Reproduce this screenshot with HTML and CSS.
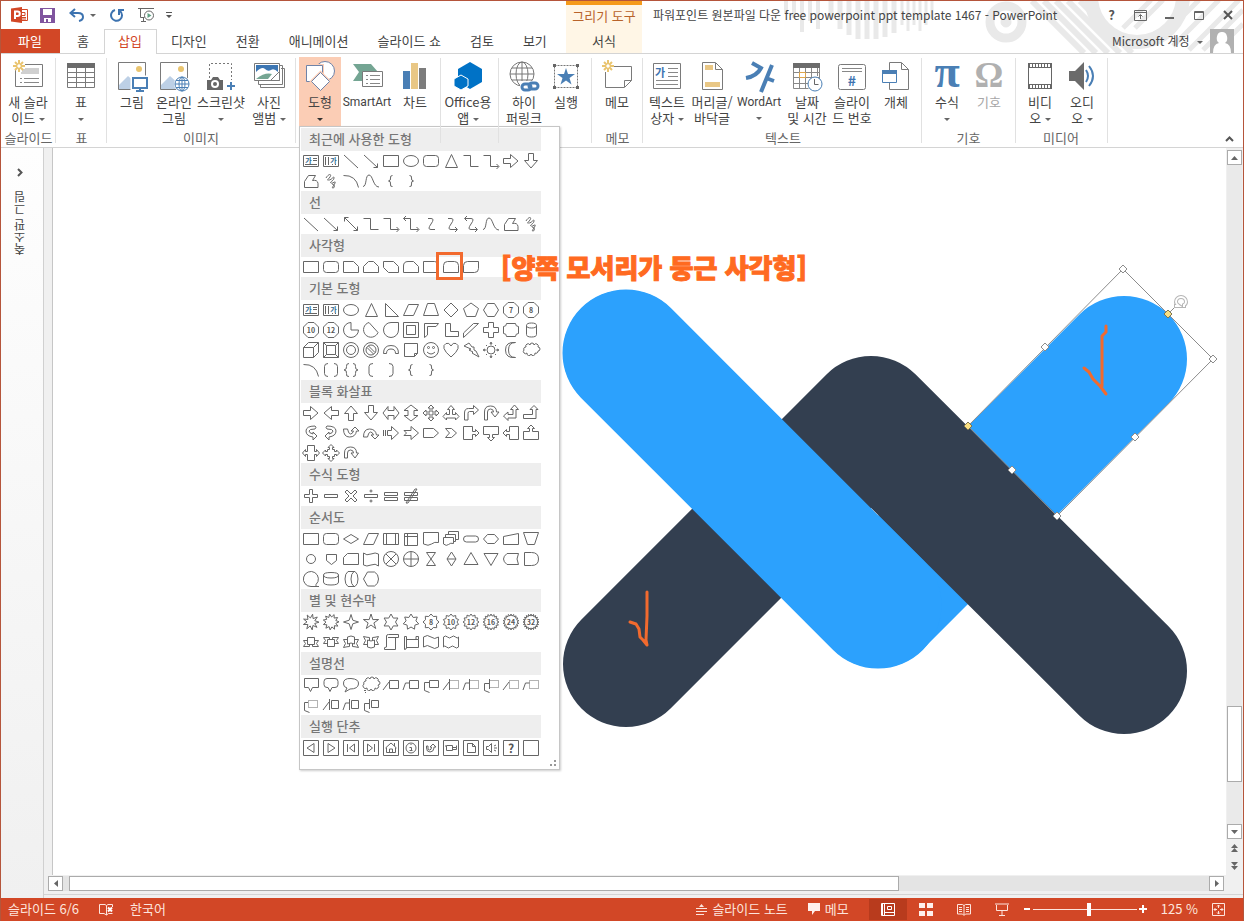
FILE: index.html
```html
<!DOCTYPE html>
<html lang="ko">

<head>
  <meta charset="UTF-8">
  <meta name="viewport" content="width=device-width, initial-scale=1.0">
  <title>파워포인트 원본파일 다운 - PowerPoint</title>
  <link rel="stylesheet" href="styles.css">
</head>

<body>
  <div class="window">
    <!-- 제목 표시줄 -->
    <header class="header">
      <svg class="deco" width="460" height="52" viewBox="784 1 460 52">
        <g stroke="#e9e9e9" fill="none">
          <path stroke-width="4" d="M787 1v13M795 1v17M803 1v31M811 1v20M819 1v28" />
          <path stroke-width="5" d="M832 1v18M841 1v28M850 1v34M859 1v38M868 1v38M877 1v38M886 1v36M895 1v32" />
          <path stroke-width="3" d="M903 1v24M909 1v30M915 1v24M921 1v30M927 1v24M933 1v18" />
          <circle cx="1007" cy="22" r="16" stroke-width="9" />
          <circle cx="1007" cy="22" r="5" fill="#e9e9e9" />
          <path stroke-width="6" d="M1033 1l52 52M1045 1l52 52M1057 1l52 52M1069 1l52 52M1081 1l52 52" />
          <circle cx="1138" cy="-4" r="46" stroke-width="14" fill="#fff" />
          <path stroke-width="5" d="M1124 28l28 -28M1136 28l28 -28M1164 36l36 -36M1174 46l46 -46M1190 50l50 -50M1204 50l40 -40M1218 50l26 -26" />
        </g>
      </svg>
      <div class="titlebar">
        <div class="quick">
          <svg class="logo" width="18" height="18" viewBox="0 0 18 18">
            <path fill="#fff" stroke="#d24726" d="M9.500 3.500h7v11h-7z" />
            <path fill="none" stroke="#d24726" d="M11 6.500h3v3h-3M11 11.500h4M11 13h4" />
            <path fill="#d24726" d="M0 2.500L11 1v16L0 15.500z" />
            <path fill="none" stroke="#fff" stroke-width="2" d="M4 13V5.500h2.500a2 2 0 0 1 0 4.500H4" />
          </svg>
          <button class="qbtn save" aria-label="저장">
            <svg width="15" height="15" viewBox="0 0 15 15">
              <path fill="#80559f" d="M0 0h15v15H0z" />
              <path fill="#fff" d="M3 1h9v6H3zM4 10h7v4H8v-3H6v3H4z" />
            </svg>
          </button>
          <button class="qbtn undo" aria-label="실행 취소">
            <svg width="16" height="14" viewBox="0 0 16 14">
              <path fill="none" stroke="#3d73b0" stroke-width="2" d="M6 1L1.500 5L6 9M2 5h7q5 0 5 4q0 3-4 4" />
            </svg>
            <i class="caret"></i>
          </button>
          <button class="qbtn redo" aria-label="다시 실행">
            <svg width="14" height="14" viewBox="0 0 14 14">
              <path fill="none" stroke="#3d73b0" stroke-width="2" d="M5 2a5.500 5.500 0 1 0 5 1M9 7V2h5" />
            </svg>
          </button>
          <button class="qbtn show" aria-label="처음부터 시작">
            <svg width="17" height="16" viewBox="0 0 17 16">
              <path fill="none" stroke="#666" d="M0 1.500h16M2.500 2v8.500h4M5.500 11v3M3 14.500h5" />
              <circle cx="11" cy="8.500" r="4.500" fill="#fff" stroke="#666" />
              <path fill="#5fa082" d="M9.500 6v5l4-2.500z" />
            </svg>
          </button>
          <button class="qbtn" aria-label="빠른 실행 도구 모음 사용자 지정">
            <svg width="6" height="8" viewBox="0 0 6 8">
              <path fill="#555" d="M0 1h6v1H0zM0 4h6L3 7z" />
            </svg>
          </button>
        </div>
        <div class="context">그리기 도구</div>
        <h1 class="title">파워포인트 원본파일 다운 free powerpoint ppt template 1467 - PowerPoint</h1>
        <div class="winbtns">
          <button aria-label="도움말">?</button>
          <button aria-label="리본 메뉴 표시 옵션">
            <svg width="13" height="11" viewBox="0 0 13 11">
              <path fill="none" stroke="#666" d="M.5.5h12v10H.5zM1 2.500h11M6.500 9V5M4.500 6.500l2-2l2 2" />
            </svg>
          </button>
          <button aria-label="최소화">
            <svg width="10" height="11" viewBox="0 0 10 11"><path fill="#666" d="M0 7h9v2H0z" /></svg>
          </button>
          <button aria-label="최대화">
            <svg width="10" height="11" viewBox="0 0 10 11"><path fill="none" stroke="#666" d="M.5 1.500h9v8h-9zM0 2.500h10" /></svg>
          </button>
          <button aria-label="닫기">
            <svg width="10" height="10" viewBox="0 0 10 10"><path stroke="#555" stroke-width="2" d="M1 1l8 8M9 1l-8 8" /></svg>
          </button>
        </div>
      </div>

      <nav class="tabs">
        <div class="tablist">
          <button class="tab file">파일</button>
          <button class="tab">홈</button>
          <button class="tab active">삽입</button>
          <button class="tab">디자인</button>
          <button class="tab">전환</button>
          <button class="tab">애니메이션</button>
          <button class="tab">슬라이드 쇼</button>
          <button class="tab">검토</button>
          <button class="tab">보기</button>
        </div>
        <button class="context format">서식</button>
        <button class="account">Microsoft 계정 <i class="caret"></i></button>
        <svg class="avatar" width="24" height="24" viewBox="0 0 24 24">
          <path fill="#b1b1b1" d="M0 0h24v24H0z" />
          <path fill="#fff" d="M12 3a5 6 0 0 1 3 11q6 1 6 10H3q0-9 6-10a5 6 0 0 1 3-11z" />
        </svg>
      </nav>
    </header>

    <!-- 리본 메뉴 -->
    <section class="ribbon">
      <div class="group g-slide">
        <div class="items">
          <button class="big w54">
            <svg viewBox="0 0 32 32">
              <path fill="#fff" stroke="#7a7a7a" d="M3.500 4.500h27v22h-27z" />
              <path fill="#d0d0d0" d="M9 8h18v6H9z" />
              <path stroke="#888" d="M8 18.500h2M12 18.500h15M8 22.500h2M12 22.500h15" />
              <path stroke="#fff" stroke-width="6" d="M1 6h12M7 1v11" />
              <path stroke="#e9c46f" stroke-width="2" d="M7 0v4M7 8v4M1 6h4M9 6h4M3 2l3 3M8 7l3 3M11 2l-3 3M6 7l-3 3" />
            </svg>
            <span>새 슬라<br>이드 <i class="caret"></i></span>
          </button>
        </div>
        <p class="gname">슬라이드</p>
      </div>

      <div class="group g-table">
        <div class="items">
          <button class="big w50">
            <svg viewBox="0 0 32 32">
              <path fill="#fff" stroke="#7a7a7a" d="M2.500 3.500h27v24h-27zM2 12.500h28M2 17.500h28M2 22.500h28M11.500 8v20M20.500 8v20" />
              <path fill="#6b6b6b" d="M2 3h28v5H2z" />
            </svg>
            <span>표<br><i class="caret"></i></span>
          </button>
        </div>
        <p class="gname">표</p>
      </div>

      <div class="group g-image">
        <div class="items">
          <button class="big w42">
            <svg viewBox="0 0 32 32">
              <path fill="#fff" stroke="#7a7a7a" d="M2.500 2.500h27v27h-27z" />
              <circle cx="23" cy="9" r="3" fill="#e9c46f" />
              <path fill="#bdd0e6" d="M3 25l9-9l10 9v4H3z" />
              <path fill="#fff" stroke="#fff" stroke-width="3" d="M16 17h16v12H16z" />
              <path fill="#fff" stroke="#4a7fb5" stroke-width="2" d="M17 18h14v10H17z" />
              <path stroke="#4a7fb5" stroke-width="2" d="M24 28v3M20 31h8" />
            </svg>
            <span>그림</span>
          </button>
          <button class="big w42">
            <svg viewBox="0 0 32 32">
              <path fill="#fff" stroke="#7a7a7a" d="M2.500 2.500h27v27h-27z" />
              <circle cx="23" cy="9" r="3" fill="#e9c46f" />
              <path fill="#bdd0e6" d="M3 25l9-9l10 9v4H3z" />
              <circle cx="24" cy="24" r="8" fill="#fff" />
              <g fill="none" stroke="#4a7fb5">
                <circle cx="24" cy="24" r="7" />
                <ellipse cx="24" cy="24" rx="3" ry="7" />
                <path d="M17 24h14M18 20.500h12M18 27.500h12M24 17v14" />
              </g>
            </svg>
            <span>온라인<br>그림</span>
          </button>
          <button class="big w52">
            <svg viewBox="0 0 32 32">
              <path fill="none" stroke="#777" stroke-dasharray="2 2" d="M4.500 22V3.500h22V20" />
              <path fill="#666" d="M2 20h4l2-3h5l2 3h3v10H2z" />
              <circle cx="10" cy="24" r="4" fill="#fff" />
              <circle cx="10" cy="24" r="2" fill="#666" />
              <path stroke="#4a7fb5" stroke-width="2" d="M22 26h8M26 22v8" />
            </svg>
            <span>스크린샷<br><i class="caret"></i></span>
          </button>
          <button class="big w44">
            <svg viewBox="0 0 32 32">
              <path fill="none" stroke="#7a7a7a" d="M7.500 24v3.500h24v-19H28M5.500 20v4.500h24v-19H27" />
              <path fill="#fff" stroke="#7a7a7a" d="M1.500 3.500h25v17h-25z" />
              <path fill="#3c76b3" d="M3 5h22v7q-4-4-7-2t-6-1t-9 3z" />
              <path fill="#74a593" d="M3 19q9-7 16-5l-4 5z" />
              <path fill="#fff" stroke="#7a7a7a" d="M17.500 20.500l9-9v9z" />
            </svg>
            <span>사진<br>앨범 <i class="caret"></i></span>
          </button>
        </div>
        <p class="gname">이미지</p>
      </div>

      <div class="group g-illust">
        <div class="items">
          <div class="dropdown">
            <button class="big w42 pressed" aria-expanded="true">
              <svg viewBox="0 0 32 32">
                <g fill="#fff" stroke="#6f83a8">
                  <circle cx="21" cy="11" r="9.500" />
                  <path stroke="#fbcdb5" stroke-width="3" d="M2.500 5.500h16v16h-16z" />
                  <path d="M2.500 5.500h16v16h-16z" />
                  <path stroke="#fbcdb5" stroke-width="3" d="M16.500 12.500l9 9l-9 9l-9-9z" />
                  <path d="M16.500 12.500l9 9l-9 9l-9-9z" />
                </g>
              </svg>
              <span>도형<br><i class="caret"></i></span>
            </button>
            <div class="gallery" id="gallery"></div>
          </div>
          <button class="big w52 latin">
            <svg viewBox="0 0 32 32">
              <path fill="#74a593" d="M2 4h18l7 8h-15v9H2l6-9z" />
              <path fill="#fff" stroke="#7a7a7a" d="M11.500 11.500h20v15h-20z" />
              <path stroke="#888" d="M15 15.500h2M19 15.500h10M15 19.500h2M19 19.500h10M15 23.500h2M19 23.500h10" />
            </svg>
            <span>SmartArt</span>
          </button>
          <button class="big w44">
            <svg viewBox="0 0 32 32">
              <path fill="#4a7fb5" d="M4 11h7v18H4z" />
              <path fill="#e9c785" d="M12 3h7v26h-7z" />
              <path fill="#7c7c7c" d="M20 8h7v21h-7z" />
            </svg>
            <span>차트</span>
          </button>
        </div>
      </div>

      <div class="group g-app">
        <div class="items">
          <button class="big w54">
            <svg viewBox="0 0 32 32">
              <path fill="#0072c6" d="M18 2l12 7v13l-12 7l-12-7V9z" />
              <path fill="#0072c6" stroke="#fff" d="M9 15l7 4v7l-7 4l-7-4v-7z" />
            </svg>
            <span>Office용<br>앱 <i class="caret"></i></span>
          </button>
        </div>
      </div>

      <div class="group g-link">
        <div class="items">
          <button class="big w44">
            <svg viewBox="0 0 32 32">
              <g fill="none" stroke="#777">
                <circle cx="14" cy="14" r="12" />
                <ellipse cx="14" cy="14" rx="6" ry="12" />
                <path d="M2 14h24M4 8h20M4 20h20M14 2v24" />
              </g>
              <path fill="#fff" d="M12 21h20v11H12z" />
              <g fill="none" stroke="#4a7fb5" stroke-width="3">
                <rect x="14" y="24" width="9" height="6" rx="3" />
                <rect x="21" y="23" width="9" height="6" rx="3" />
              </g>
            </svg>
            <span>하이<br>퍼링크</span>
          </button>
          <button class="big w40">
            <svg viewBox="0 0 32 32">
              <path fill="none" stroke="#777" stroke-dasharray="2 1" d="M4.500 5.500h23v22h-23z" />
              <path fill="#666" d="M3 4h3v3H3zM26 4h3v3h-3zM3 26h3v3H3zM26 26h3v3h-3z" />
              <path fill="#4a7fb5" d="M16 8l2 6h7l-5.500 4l2 6.500L16 20.500l-5.500 4l2-6.500L7 14h7z" />
            </svg>
            <span>실행</span>
          </button>
        </div>
      </div>

      <div class="group g-memo">
        <div class="items">
          <button class="big w50">
            <svg viewBox="0 0 32 32">
              <path fill="#fff" stroke="#7a7a7a" d="M4.500 6.500h26v14l-7 7h-19zM23.500 27v-6.500h7" />
              <path stroke="#fff" stroke-width="6" d="M1 6h12M7 1v11" />
              <path stroke="#e9c46f" stroke-width="2" d="M7 0v4M7 8v4M1 6h4M9 6h4M3 2l3 3M8 7l3 3M11 2l-3 3M6 7l-3 3" />
            </svg>
            <span>메모</span>
          </button>
        </div>
        <p class="gname">메모</p>
      </div>

      <div class="group g-text">
        <div class="items">
          <button class="big w46">
            <svg viewBox="0 0 32 32">
              <path fill="#fff" stroke="#7a7a7a" d="M2.500 3.500h27v25h-27z" />
              <text x="4" y="17" font-size="11" font-weight="700" fill="#3d73b0">가</text>
              <path stroke="#888" d="M17 8.500h10M17 12.500h10M17 16.500h10M5 20.500h22M5 24.500h22" />
            </svg>
            <span>텍스트<br>상자 <i class="caret"></i></span>
          </button>
          <button class="big w44">
            <svg viewBox="0 0 32 32">
              <path fill="#fff" stroke="#7a7a7a" d="M6.500 2.500h13l7 7v20h-20zM19.500 3v6.500h7" />
              <path fill="#e9c785" d="M9 5h8v5H9zM9 22h15v5H9z" />
            </svg>
            <span>머리글/<br>바닥글</span>
          </button>
          <button class="big w50 latin">
            <svg viewBox="0 0 32 32">
              <path fill="none" stroke="#4a7fb5" stroke-width="4" d="M9 3l9 5q-4 8-15 10M29 5L18 32M23 18l8 3" />
            </svg>
            <span>WordArt<br><i class="caret"></i></span>
          </button>
          <button class="big w46">
            <svg viewBox="0 0 32 32">
              <path fill="#fff" stroke="#888" d="M2.500 8v20.500M2.500 12.500h26M2.500 17.500h26M2.500 23.500h20M8.500 8v20M14.500 8v20M20.500 8v16M26.500 8v8M2.500 28.500h15M28.500 8v12" />
              <path fill="#6b6b6b" d="M2 3h27v5H2z" />
              <path fill="none" stroke="#e0a74b" d="M8.500 12.500h6v5h-6z" />
              <circle cx="24" cy="24" r="7" fill="#fff" stroke="#4a7fb5" />
              <path fill="none" stroke="#666" d="M23.500 19v5.500h4" />
            </svg>
            <span>날짜<br>및 시간</span>
          </button>
          <button class="big w44">
            <svg viewBox="0 0 32 32">
              <rect x="2.500" y="4.500" width="27" height="25" rx="2" fill="#fff" stroke="#7a7a7a" />
              <path stroke="#888" d="M6 8.500h20M6 11.500h20" />
              <text x="16" y="26" font-size="14" font-weight="700" text-anchor="middle" fill="#3d73b0">#</text>
            </svg>
            <span>슬라이<br>드 번호</span>
          </button>
          <button class="big w44">
            <svg viewBox="0 0 32 32">
              <path fill="#fff" stroke="#7a7a7a" d="M9.500 2.500h12l7 7v20h-19zM21.500 3v6.500h7" />
              <path fill="#fff" stroke="#4a7fb5" d="M2.500 10.500h14v12h-14z" />
              <path fill="#4a7fb5" d="M2 10h15v4H2z" />
            </svg>
            <span>개체</span>
          </button>
        </div>
        <p class="gname">텍스트</p>
      </div>

      <div class="group g-symbol">
        <div class="items">
          <button class="big w42">
            <svg viewBox="0 0 32 32"><text class="glyph" x="16" y="27" fill="#4a7fb5">π</text></svg>
            <span>수식<br><i class="caret"></i></span>
          </button>
          <button class="big w42" disabled>
            <svg viewBox="0 0 32 32"><text class="glyph omega" x="16" y="27" fill="#b0b0b0">Ω</text></svg>
            <span>기호</span>
          </button>
        </div>
        <p class="gname">기호</p>
      </div>

      <div class="group g-media">
        <div class="items">
          <button class="big w42">
            <svg viewBox="0 0 32 32">
              <path fill="#666" d="M4 3h24v26H4z" />
              <path fill="#fff" d="M5 8h22v16H5z" />
              <path stroke="#fff" stroke-width="3" stroke-dasharray="2 1" d="M6 5.500h21M6 26.500h21" />
            </svg>
            <span>비디<br>오 <i class="caret"></i></span>
          </button>
          <button class="big w42">
            <svg viewBox="0 0 32 32">
              <path fill="#6b6b6b" d="M3 11h6l9-9v28l-9-9H3z" />
              <path fill="none" stroke="#4a7fb5" stroke-width="2" d="M20 10q4 6 0 12M23 6q8 10 0 20" />
            </svg>
            <span>오디<br>오 <i class="caret"></i></span>
          </button>
        </div>
        <p class="gname">미디어</p>
      </div>

      <button class="collapse" aria-label="리본 메뉴 축소">
        <svg width="9" height="6" viewBox="0 0 9 6"><path fill="none" stroke="#555" stroke-width="2" d="M1 5l3.500-3.500L8 5" /></svg>
      </button>
    </section>

    <!-- 작업 영역 -->
    <main class="work">
      <aside class="thumbs">
        <button aria-label="축소판 그림 확장">
          <svg width="6" height="9" viewBox="0 0 6 9"><path fill="none" stroke="#555" stroke-width="2" d="M1 1l3.500 3.500L1 8" /></svg>
        </button>
        <span>축소판 그림</span>
      </aside>

      <div class="editor">
        <div class="slide">
          <svg class="canvas" viewBox="53 148 1173 727">
            <g fill="none" stroke-width="126" stroke-linecap="round" stroke-linejoin="round">
              <path stroke="#2ca1fd" d="M626 353L878 605L1124 359" />
              <path stroke="#333f50" d="M626 664L871 419L1124 671" />
              <path stroke="#2ca1fd" stroke-width="127" d="M626 353L878 605" />
            </g>
            <!-- 선택 영역 -->
            <path fill="none" stroke="#8c8c8c" d="M1123 269L1213 359L1057 516L968 426zM1168 314l8-8" />
            <g fill="#fff" stroke="#8c8c8c">
              <path d="M1123 265l4 4l-4 4l-4-4zM1213 355l4 4l-4 4l-4-4zM1045 343l4 4l-4 4l-4-4zM1135 433l4 4l-4 4l-4-4zM1012 466l4 4l-4 4l-4-4zM1057 512l4 4l-4 4l-4-4z" />
              <path fill="#fbe083" stroke="#7d7550" d="M1168 310l4 4l-4 4l-4-4zM968 422l4 4l-4 4l-4-4z" />
            </g>
            <path fill="none" stroke="#b5b5b5" stroke-width="4" d="M1174 306h5q-3-2-3-4a5 5 0 1 1 10 0q0 2-2 3v3" />
            <path fill="none" stroke="#fff" stroke-width="2" d="M1175 306h4q-3-2-3-4a5 5 0 1 1 10 0q0 2-2 3v2" />
            <!-- 체크 표시 -->
            <g fill="none" stroke="#f26a2e" stroke-width="3" stroke-linecap="round" stroke-linejoin="round">
              <path d="M1106 326v6l-4 4v50M1084 368l5 4l4 7l7 7l6 8" />
              <path d="M647 592v24l-1 24l1 5M630 622l6 2l3 5l1 8l3 3l4 5" />
            </g>
          </svg>
          <strong class="note">[양쪽 모서리가 둥근 사각형]</strong>
        </div>

        <div class="vscroll">
          <button class="sbtn" aria-label="위로"><svg width="7" height="4" viewBox="0 0 7 4"><path d="M0 4h7L3.500 0z" /></svg></button>
          <div class="vtrack"><div class="vthumb"></div></div>
          <button class="sbtn" aria-label="아래로"><svg width="7" height="4" viewBox="0 0 7 4"><path d="M0 0h7L3.500 4z" /></svg></button>
          <button class="page" aria-label="이전 슬라이드"><svg width="7" height="8" viewBox="0 0 7 8"><path d="M0 4h7L3.500 0zM0 8h7L3.500 4z" /></svg></button>
          <button class="page" aria-label="다음 슬라이드"><svg width="7" height="8" viewBox="0 0 7 8"><path d="M0 0h7L3.500 4zM0 4h7L3.500 8z" /></svg></button>
        </div>

        <div class="hscroll">
          <button class="sbtn" aria-label="왼쪽으로"><svg width="4" height="7" viewBox="0 0 4 7"><path d="M4 0v7L0 3.500z" /></svg></button>
          <div class="htrack"><div class="hthumb"></div></div>
          <button class="sbtn" aria-label="오른쪽으로"><svg width="4" height="7" viewBox="0 0 4 7"><path d="M0 0v7l4-3.500z" /></svg></button>
        </div>
      </div>
    </main>

    <!-- 상태 표시줄 -->
    <footer class="status">
      <span>슬라이드 6/6</span>
      <button class="spell" aria-label="맞춤법 검사">
        <svg width="15" height="13" viewBox="0 0 15 13">
          <path fill="none" stroke="#fde5de" d="M7.500 12L5 10.500H.5v-9H6l1.500 1v9.500l2-1.500h4M7.500 2.500L9 1.500h4.500V4" />
          <path stroke="#fff" stroke-width="2" d="M9 4.500l4 4M13 4.500l-4 4" />
        </svg>
      </button>
      <button>한국어</button>
      <div class="views">
        <button class="notes">
          <svg width="11" height="11" viewBox="0 0 11 11"><path fill="#fde5de" d="M5.500 0L8 3H3zM0 4h11v1H0zM0 7h11v1H0zM0 10h8v1H0z" /></svg>
          슬라이드 노트
        </button>
        <button class="memo">
          <svg width="12" height="12" viewBox="0 0 12 12"><path fill="#fff0ec" d="M0 0h12v8H7l-3 4V8H0z" /></svg>
          메모
        </button>
        <button class="view on" aria-label="기본">
          <svg width="14" height="13" viewBox="0 0 14 13"><path fill="none" stroke="#fff" d="M.5.5h13v12H.5zM1.500 1v11M3.500 1v11M4 9.500h9M6.500 3.500h4v3h-4z" /></svg>
        </button>
        <button class="view" aria-label="여러 슬라이드">
          <svg width="14" height="13" viewBox="0 0 14 13"><path fill="#fff0ec" d="M0 0h6v5H0zM8 0h6v5H8zM0 8h6v5H0zM8 8h6v5H8z" /></svg>
        </button>
        <button class="view" aria-label="읽기용 보기">
          <svg width="14" height="13" viewBox="0 0 14 13"><path fill="none" stroke="#fde5de" d="M7 12.500L5.500 11H.5V1.500h5L7 2.500l1.500-1h5V11h-5zM7 2v10M2 4.500h3M2 6.500h3M2 8.500h3M9 4.500h3M9 6.500h3M9 8.500h3" /></svg>
        </button>
        <button class="view" aria-label="슬라이드 쇼">
          <svg width="14" height="13" viewBox="0 0 14 13"><path fill="none" stroke="#fde5de" d="M0 1h14M1.500 2v5.500h11V2M7 8v4M4 12.500h6" /></svg>
        </button>
        <button class="zoombtn" aria-label="축소"><svg width="8" height="8" viewBox="0 0 8 8"><path stroke="#fff" stroke-width="2" d="M1 4h6" /></svg></button>
        <input class="zoom" type="range" min="0" max="100" value="54" aria-label="확대/축소">
        <button class="zoombtn" aria-label="확대"><svg width="8" height="8" viewBox="0 0 8 8"><path stroke="#fff" stroke-width="2" d="M0 4h8M4 0v8" /></svg></button>
        <button class="percent">125 %</button>
        <button class="fit" aria-label="창에 맞춤">
          <svg width="13" height="13" viewBox="0 0 13 13"><path fill="none" stroke="#fde5de" d="M.5.5h12v12H.5zM6.500 2v3M5 3.500l1.500-1.500L8 3.500M6.500 11V8M5 9.500L6.500 11L8 9.500M2 6.500h3M3.500 5L2 6.500L3.500 8M11 6.500H8M9.500 5L11 6.500L9.500 8" /></svg>
        </button>
      </div>
    </footer>
  </div>
  <script src="script.js"></script>
</body>

</html>
```

FILE: styles.css
```css
* {
  box-sizing: border-box;
}

body {
  margin: 0;
  font-family: "Noto Sans CJK KR", sans-serif;
  font-size: 13px;
  line-height: 16px;
  color: #444;
}

button {
  padding: 0;
  border: 0;
  background: none;
  font: inherit;
  color: inherit;
  cursor: pointer;
}

svg {
  display: block;
}

.window {
  display: flex;
  flex-direction: column;
  height: 100vh;
  border: 1px solid #b5553b;
  border-bottom: 0;
  background-color: #fff;
}

.caret {
  display: inline-block;
  border: 3px solid transparent;
  border-top-color: #666;
  border-bottom: 0;
  vertical-align: middle;
}

/* 제목 표시줄 */
.header {
  position: relative;
}

.deco {
  position: absolute;
  top: 0;
  right: 0;
}

.titlebar {
  position: relative;
  display: flex;
  height: 28px;
}

.quick {
  display: flex;
  align-items: center;
  width: 565px;
  padding-left: 10px;
}

.logo {
  margin-right: 11px;
}

.qbtn {
  display: flex;
  align-items: center;
  gap: 5px;
}

.save {
  margin-right: 14px;
}

.undo {
  margin-right: 14px;
}

.redo {
  margin-right: 14px;
}

.show {
  margin-right: 11px;
}

.context {
  width: 76px;
  border-top: 4px solid #f59a1b;
  background-color: #fff6e6;
  line-height: 22px;
  text-align: center;
  color: #b8632a;
}

.title {
  flex: 1;
  margin: 0;
  padding-left: 11px;
  font-size: 12px;
  font-weight: 400;
  line-height: 28px;
  white-space: nowrap;
}

.winbtns {
  display: flex;
  padding-right: 1px;
}

.winbtns button {
  display: flex;
  align-items: center;
  justify-content: center;
  width: 29px;
  font-weight: 700;
  color: #555;
}

.tabs {
  position: relative;
  display: flex;
  height: 25px;
  border-bottom: 1px solid #d4d4d4;
}

.tablist {
  display: flex;
  width: 565px;
}

.tab {
  flex: none;
  height: 25px;
  padding: 0 14px 2px 13px;
  border: 1px solid transparent;
  border-bottom: 0;
  white-space: nowrap;
}

.file {
  width: 59px;
  height: 24px;
  margin-right: 3px;
  background-color: #d24726;
  color: #fff;
}

.active {
  border-color: #d4d4d4;
  background-color: #fff;
  color: #d24726;
}

.format {
  height: 24px;
  border: 0;
  color: #444;
}

.account {
  margin-left: auto;
  margin-right: 7px;
  font-size: 12px;
}

.account .caret {
  margin-left: 4px;
}

.avatar {
  margin-right: 9px;
}

/* 리본 메뉴 */
.ribbon {
  position: relative;
  z-index: 2;
  display: flex;
  height: 94px;
  border-bottom: 1px solid #d4d4d4;
}

.group {
  position: relative;
  display: flex;
  flex-direction: column;
  justify-content: space-between;
  padding: 3px 0 1px;
}

.group::after {
  content: "";
  position: absolute;
  top: 4px;
  right: 0;
  bottom: 4px;
  width: 1px;
  background-color: #e1e1e1;
}

.g-slide {
  width: 55px;
}

.g-table,
.g-memo {
  width: 51px;
}

.g-image {
  width: 189px;
  padding-left: 4px;
  padding-right: 5px;
}

.g-illust {
  width: 145px;
  padding-left: 3px;
}

.g-app {
  width: 58px;
}

.g-link {
  width: 93px;
  padding-left: 3px;
}

.g-text {
  width: 279px;
  padding-left: 1px;
}

.g-symbol {
  width: 94px;
  padding-left: 4px;
  padding-right: 5px;
}

.g-media {
  width: 92px;
  padding-left: 3px;
  padding-right: 5px;
}

.items {
  display: flex;
}

.big {
  display: flex;
  flex-direction: column;
  align-items: center;
  height: 69px;
  padding-top: 3px;
  white-space: nowrap;
}

.big svg {
  width: 32px;
  height: 32px;
  margin-bottom: 2px;
  overflow: visible;
}

.big:disabled {
  color: #a6a6a6;
}

.latin {
  font-family: Roboto, "Noto Sans CJK KR", sans-serif;
  font-size: 12px;
}

.w40 {
  width: 40px;
}

.w42 {
  width: 42px;
}

.w44 {
  width: 44px;
}

.w46 {
  width: 46px;
}

.w50 {
  width: 50px;
}

.w52 {
  width: 52px;
}

.w54 {
  width: 54px;
}

.pressed {
  background-color: #fbcdb5;
}

.pressed .caret {
  border-top-color: #333;
}

.glyph {
  font-family: "Liberation Serif", serif;
  font-size: 46px;
  font-weight: 700;
  text-anchor: middle;
}

.omega {
  font-size: 36px;
}

.gname {
  margin: 0;
  text-align: center;
  color: #666;
}

.collapse {
  align-self: flex-end;
  margin-left: auto;
  padding: 0 9px 5px 0;
}

/* 도형 갤러리 */
.dropdown {
  position: relative;
}

.gallery {
  position: absolute;
  top: 69px;
  left: 0;
  width: 261px;
  padding: 1px 1px 11px;
  border: 1px solid #c6c6c6;
  background-color: #fff;
  box-shadow: 1px 1px 2px rgba(0, 0, 0, .2);
}

.gallery::after {
  content: "";
  position: absolute;
  right: 3px;
  bottom: 3px;
  width: 2px;
  height: 2px;
  background-color: #999;
  box-shadow: -4px 0 #999, 0 -4px #999;
}

.gallery h2 {
  width: 240px;
  margin: 0;
  padding: 0 0 2px 8px;
  background-color: #eee;
  font-size: 13px;
  font-weight: 500;
  line-height: 21px;
  color: #777;
}

.shapes {
  display: grid;
  grid-template-columns: repeat(12, 20px);
  grid-auto-rows: 20px;
}

.shape {
  position: relative;
}

.shape svg {
  fill: none;
  stroke: #666;
}

.shape text {
  font-size: 7px;
  font-weight: 700;
  text-anchor: middle;
  fill: #555;
  stroke: none;
}

.shape .ga {
  fill: #2f6a91;
}

.shape .dot {
  stroke-dasharray: 1 1;
}

.shape .mark {
  font-size: 12px;
}

.marked::after {
  content: "";
  position: absolute;
  inset: -5px -2px -3px -5px;
  border: 3px solid #f26a2e;
}

/* 작업 영역 */
.work {
  display: flex;
  flex: 1;
  min-height: 0;
  background-color: #f0f0f0;
}

.thumbs {
  display: flex;
  flex-direction: column;
  align-items: center;
  gap: 14px;
  width: 43px;
  padding: 20px 4px 0 0;
  border-right: 1px solid #d0d0d0;
  background: linear-gradient(#fefefe, #f0f0f0);
}

.thumbs span {
  writing-mode: vertical-rl;
  transform: rotate(180deg);
  font-size: 12px;
}

.editor {
  display: grid;
  flex: 1;
  grid-template-columns: 1fr 17px;
  grid-template-rows: 1fr 20px;
  padding-bottom: 3px;
}

.slide {
  position: relative;
  min-height: 0;
  margin-left: 8px;
  border-left: 1px solid #c6c6c6;
  background-color: #fff;
}

.canvas {
  position: absolute;
  width: 100%;
  height: 100%;
}

.note {
  position: absolute;
  z-index: 3;
  top: 99px;
  left: 448px;
  font-size: 26px;
  font-weight: 900;
  line-height: 40px;
  white-space: nowrap;
  color: #ff6a21;
  -webkit-text-stroke: 1px #ff6a21;
}

.sbtn {
  display: flex;
  flex: none;
  align-items: center;
  justify-content: center;
  width: 15px;
  height: 15px;
  border: 1px solid #ababab;
  background-color: #fff;
}

.sbtn svg,
.page svg {
  fill: #666;
}

.vscroll {
  display: flex;
  flex-direction: column;
  align-items: center;
  padding-top: 2px;
}

.vtrack {
  display: flex;
  flex: 1;
  flex-direction: column;
  justify-content: flex-end;
  width: 15px;
  padding-bottom: 42px;
  background-color: #eaeaea;
}

.vthumb {
  height: 76px;
  border: 1px solid #ababab;
  background-color: #fff;
}

.page {
  display: flex;
  align-items: center;
  height: 18px;
}

.hscroll {
  display: flex;
  grid-column: 1 / 3;
  padding: 1px 19px 3px 4px;
  border-bottom: 1px solid #d4d4d4;
}

.htrack {
  flex: 1;
  padding: 0 3px 0 6px;
  background-color: #e4e4e4;
}

.hthumb {
  width: 73%;
  height: 15px;
  border: 1px solid #ababab;
  background-color: #fff;
}

/* 상태 표시줄 */
.status {
  display: flex;
  align-items: center;
  height: 23px;
  padding: 0 18px 1px 7px;
  background-color: #d24726;
  color: #fde5de;
  white-space: nowrap;
}

.spell {
  margin: 0 16px 0 20px;
}

.views {
  display: flex;
  align-items: center;
  margin-left: auto;
}

.notes,
.memo {
  display: flex;
  align-items: center;
  gap: 5px;
  margin-right: 20px;
}

.view {
  display: flex;
  align-items: center;
  justify-content: center;
  width: 38px;
  height: 21px;
}

.on {
  background-color: #b83b1d;
}

.zoombtn {
  margin: 0 2px;
}

.zoom {
  appearance: none;
  width: 104px;
  height: 13px;
  margin: 0;
  background: linear-gradient(#fde5de, #fde5de) center / 100% 1px no-repeat;
}

.zoom::-webkit-slider-thumb {
  appearance: none;
  width: 4px;
  height: 13px;
  background-color: #fff;
}

.percent {
  margin: 0 14px 0 12px;
}
```

FILE: script.js
```js
// 정다각형과 별의 꼭짓점을 계산
function star(n, outer, inner, turn) {
  let d = ''
  for (let i = 0; i < n * 2; i++) {
    const r = i % 2 === 0 ? outer : inner
    const a = Math.PI * i / n - Math.PI / 2 + (turn || 0)
    d += (i === 0 ? 'M' : 'L') + (10 + r * Math.cos(a)).toFixed(1) + ' ' + (10 + r * Math.sin(a)).toFixed(1)
  }
  return d + 'z'
}

function numbered(d, num) {
  return `<path d="${d}"/><text x="10" y="12.500">${num}</text>`
}

const oct = 'M7 2.500h6l4.500 4.500v6l-4.500 4.500h-6l-4.500-4.500v-6z'
const box = 'M2.500 2.500h15v15h-15z'
const elbow = 'M2.500 4.500h7v11h8'
const scurve = 'M7 4.500h3q4 0 0 5.500t0 5.500h4'

// 20x20 칸에 그리는 도형
const shapes = {
  textH: '<path d="M2.500 4.500h15v11h-15zM12 7.500h4M12 9.500h4M4 13.500h12"/><text class="ga" x="7.500" y="11.500">가</text>',
  textV: '<path d="M2.500 4.500h15v11h-15zM4.500 6v8M7.500 6v8M11.500 13v1M14.500 13v1"/><text class="ga" x="12.500" y="11.500">가</text>',
  line: 'M3 4L17 17',
  arrow: 'M3 4L16.500 16.500M16.500 12.500v4h-4',
  arrow2: 'M3.500 3.500L16.500 16.500M16.500 12.500v4h-4M3.500 7.500v-4h4',
  rect: 'M2.500 4.500h15v11h-15z',
  oval: '<ellipse cx="10" cy="10" rx="7.500" ry="5.500"/>',
  round: '<rect x="2.500" y="4.500" width="15" height="11" rx="3"/>',
  tri: 'M10.500 3.500l6 13h-12z',
  elbow: elbow,
  elbowA: elbow + 'M15.500 13l2.500 2.500l-2.500 2.500',
  elbowA2: elbow + 'M15.500 13l2.500 2.500l-2.500 2.500M5 2L2.500 4.500L5 7',
  scurve: scurve,
  scurveA: scurve + 'h2M14 13l2.500 2.500L14 18',
  scurveA2: scurve + 'h2M14 13l2.500 2.500L14 18M7 4.500h-3M6 2L3.500 4.500L6 7',
  freeform: 'M3.500 16.500v-6l4-6h7l-3 5q5-1 5.500 3v4z',
  scribble: 'M5 7C8 2 11 3 9 6S5 9 8 9S13 4 13 7S8 11 10 12S15 9 14 12S10 17 12 17S14 13 11 13',
  arc: 'M2.500 4.500Q15 4 17.500 16.500',
  curve: 'M2 15.500C6 15.500 4 4 8 4S12 16 18 16',
  braceL: 'M11.500 4.500q-2.500 0-2 2.500t-2 3q2.500 0 2 3t2 2.500',
  braceR: 'M8.500 4.500q2.500 0 2 2.500t2 3q-2.500 0-2 3t-2 2.500',
  bracketL: 'M12 3.500q-4 0-4 3v7q0 3 4 3',
  bracketR: 'M8 3.500q4 0 4 3v7q0 3-4 3',
  brackets: 'M7 3.500q-3.500 0-3.500 3v7q0 3 3.500 3M13 3.500q3.500 0 3.500 3v7q0 3-3.500 3',
  braces: 'M8 3.500q-3 0-2.500 3t-2.500 3.500q3 0 2.500 3.500t2.500 3M12 3.500q3 0 2.500 3t2.500 3.500q-3 0-2.500 3.500t-2.500 3',
  snip1: 'M2.500 4.500h10l5 5v6h-15z',
  snip2: 'M2.500 9.500l5-5h5l5 5v6h-15z',
  snip2d: 'M2.500 4.500h10l5 5v6h-10l-5-5z',
  snipR: 'M2.500 9q0-4.500 4.500-4.500h5.500l5 5v6h-15z',
  round1: 'M2.500 4.500h11q4 0 4 4v7h-15z',
  round2: 'M2.500 15.500v-7q0-4 4-4h7q4 0 4 4v7z',
  round2d: 'M2.500 15.500v-7q0-4 4-4h11v7q0 4-4 4z',
  rtri: 'M4.500 3.500v13h13z',
  para: 'M7.500 4.500h10l-5 11h-10z',
  trap: 'M6.500 3.500h7l4 12h-15z',
  diamond: 'M10 3l7 7l-7 7l-7-7z',
  pentagon: 'M10 3l7.500 5.500l-3 8h-9l-3-8z',
  hexagon: 'M6.500 3.500h7l4 6.500l-4 6.500h-7l-4-6.500z',
  oct7: numbered(oct, 7),
  oct8: numbered(oct, 8),
  oct10: numbered(oct, 10),
  oct12: numbered(oct, 12),
  pie: 'M10 2.500a7.500 7.500 0 1 0 7.500 7.500h-7.500z',
  chord: 'M8 2.500a7.500 7.500 0 1 0 9 10z',
  tear: 'M10 2.500h7.500v7.500a7.500 7.500 0 1 1-7.500-7.500z',
  frame: box + 'M5.500 5.500h9v9h-9z',
  halfFrame: 'M3.500 3.500h14l-2.500 3h-8.500v8.500l-3 2.500z',
  lshape: 'M4.500 3.500h5v8h8v5h-13z',
  stripe: 'M2.500 13l10-9.500h5l-15 14z',
  cross: 'M7.500 2.500h5v5h5v5h-5v5h-5v-5h-5v-5h5z',
  plaque: 'M5.500 3.500h9q0 3 3 3v7q-3 0-3 3h-9q0-3-3-3v-7q3 0 3-3z',
  can: 'M5.500 5.500v9q0 2.500 5 2.500t5-2.500v-9q0-2.500-5-2.500t-5 2.500q0 2.500 5 2.500t5-2.500',
  cube: 'M2.500 7.500h10v10h-10zl5-5h10l-5 5M17.500 2.500v10l-5 5',
  bevel: box + 'M5.500 5.500h9v9h-9zM2.500 2.500l3 3M17.500 2.500l-3 3M2.500 17.500l3-3M17.500 17.500l-3-3',
  donut: '<circle cx="10" cy="10" r="7.500"/><circle cx="10" cy="10" r="4.500"/>',
  no: '<circle cx="10" cy="10" r="7.500"/><circle cx="10" cy="10" r="5"/><path d="M6 7.500l6.500 6.500M7.500 6l6.500 6.500"/>',
  blockArc: 'M2.500 13.500q0-8 7.500-8t7.500 8h-3q0-4.500-4.500-4.500t-4.500 4.500z',
  fold: 'M3.500 3.500h13v10l-3 3h-10zM16.500 13.500h-3v3',
  smiley: '<circle cx="10" cy="10" r="7.500"/><circle cx="7.500" cy="7.500" r="1"/><circle cx="12.500" cy="7.500" r="1"/><path d="M6 12q4 4 8 0"/>',
  heart: 'M10 6q-2-4-5-2.500t-2 5T10 17q6-5 7-8.500t-2-5T10 6z',
  bolt: 'M3 6l5-3l3 4l2 0l0 3l2 1l3 6l-7-4l1-1l-4-2l2-1z',
  sun: '<circle cx="10" cy="10" r="4"/><path d="M9 4l1-2l1 2zM9 16l1 2l1-2zM4 9l-2 1l2 1zM16 9l2 1l-2 1zM5 5l1 1M15 5l-1 1M5 15l1-1M15 15l-1-1"/>',
  moon: 'M14.500 2.500q-7 0-7 7.500t7 7.500q-10 1-10-7.500t10-7.500z',
  cloud: 'M5 7a2 2 0 0 1 4-2a2 2 0 0 1 4 0a2 2 0 0 1 4 2a2 2 0 0 1 0 4a2 2 0 0 1-3 2a2 2 0 0 1-4 1a2 2 0 0 1-4-1a2 2 0 0 1-3-3a2 2 0 0 1 2-3z',
  right: 'M2.500 7.500h7v-4l7.500 6.500l-7.500 6.500v-4h-7z',
  left: 'M17.500 7.500h-7v-4l-7.500 6.500l7.500 6.500v-4h7z',
  up: 'M7.500 17.500v-7h-4l6.500-7.500l6.500 7.500h-4v7z',
  down: 'M7.500 2.500v7h-4l6.500 7.500l6.500-7.500h-4v-7z',
  leftRight: 'M2 10l5-6.500v4h6v-4l5 6.500l-5 6.500v-4h-6v4z',
  upDown: 'M10 2l7 5.500h-4v5h4l-7 5.500l-7-5.500h4v-5h-4z',
  quad: 'M10 2l3 3h-2v4h4v-2l3 3l-3 3v-2h-4v4h2l-3 3l-3-3h2v-4h-4v2l-3-3l3-3v2h4v-4h-2z',
  triArrow: 'M10 2.500l3.500 4h-2v5h3v-2l3.500 4l-3.500 3.500v-2h-9v2l-3.500-3.500l3.500-4v2h3v-5h-2z',
  bent: 'M3.500 17v-7q0-4.500 4-4.500h5v-3l5 4.500l-5 4.500v-3h-4q-1.500 0-1.500 2v6.500z',
  uturn: 'M3.500 17v-8q0-6 6-6t6 6h2.500l-4 5l-4-5h2.500q0-3-3-3t-3 3v8z',
  leftUp: 'M2.500 13l4.500-4v2.500h5v-5h-2.500l4-4.500l4 4.500h-2.500v8.500h-8v2.500z',
  bentUp: 'M2.500 11.500h9v-5h-2.500l4-4l4 4h-2v9h-12.500z',
  curvedR: 'M14 3q-9 0-9 5t7 6v3l4-4l-4-4v2q-4-1-4-3t6-2q2-2 0-3z',
  curvedL: 'M6 3q9 0 9 5t-7 6v3l-4-4l4-4v2q4-1 4-3t-6-2q-2-2 0-3z',
  curvedU: 'M2.500 6q0 8 6 8t7-6h2.500l-4-4l-4 4h2.500q-1 3-3 3t-3-5z',
  curvedD: 'M2.500 14q0-8 6-8t7 6h2.500l-4 4l-4-4h2.500q-1-3-3-3t-3 5z',
  striped: 'M2.500 7v6M4.500 7v6M6.500 7.500h4v-4l7 6.500l-7 6.500v-4h-4z',
  notched: 'M3 7.500h7v-4l7.500 6.500l-7.500 6.500v-4h-7l2.500-2.500z',
  homePlate: 'M2.500 5.500h10l5 4.500l-5 4.500h-10z',
  chevron: 'M4.500 5.500h6l5 4.500l-5 4.500h-6l4-4.500z',
  callR: 'M2.500 3.500h9v5h3v-2l3.500 3.500l-3.500 3.500v-2h-3v5h-9z',
  callD: 'M2.500 3.500h15v8h-6v3h2l-3.500 3.500l-3.500-3.500h2v-3h-6z',
  callL: 'M17.500 3.500h-9v5h-3v-2l-3.500 3.500l3.500 3.500v-2h3v5h9z',
  callU: 'M2.500 16.500h15v-8h-6v-3h2l-3.500-3.500l-3.500 3.500h2v3h-6z',
  callLR: 'M6.500 2.500h7v6h2v-2l3 3.500l-3 3.500v-2h-2v6h-7v-6h-2v2l-3-3.500l3-3.500v2h2z',
  callQ: 'M6.500 6.500h2v-2h-1.500l3-3l3 3h-1.500v2h2v2h2v-1.500l3 3l-3 3v-1.500h-2v2h-2v2h1.500l-3 3l-3-3h1.500v-2h-2v-2h-2v1.500l-3-3l3-3v1.500h2z',
  circular: 'M3.500 15v-5q0-6 6-6t6 6h2l-3.500 5l-4-5h2.500q0-3-3-3t-3 3v5z',
  plus: 'M8.500 3.500h3v5h5v3h-5v5h-3v-5h-5v-3h5z',
  minus: 'M3.500 8.500h13v3h-13z',
  times: 'M6 4l4 4l4-4l2 2l-4 4l4 4l-2 2l-4-4l-4 4l-2-2l4-4l-4-4z',
  div: '<path d="M3.500 8.500h13v3h-13z"/><circle cx="10" cy="5" r="1"/><circle cx="10" cy="15" r="1"/>',
  eq: 'M3.500 6.500h13v3h-13zM3.500 11.500h13v3h-13z',
  neq: 'M3.500 6.500h13v3h-13zM3.500 11.500h13v3h-13zM5 17l9-14h2l-9 14z',
  flatDiamond: 'M10 5.500l7.500 4.500l-7.500 4.500l-7.500-4.500z',
  predefined: 'M2.500 4.500h15v11h-15zM5.500 4v12M14.500 4v12',
  internal: 'M3.500 4.500h13v12h-13zM6.500 4v12M3 7.500h13',
  doc: 'M2.500 3.500h15v10q-4-1-7 1.500t-8 0z',
  multidoc: 'M2.500 8.500h10v6q-3-1-5 1t-5-.5zM4.500 8v-2.500h10v7h-2M7.500 5v-2.500h10v8h-3',
  terminator: '<rect x="2.500" y="7" width="15" height="6" rx="3"/>',
  prep: 'M6.500 5.500h7l4 4.500l-4 4.500h-7l-4-4.500z',
  manualIn: 'M2.500 7.500l15-3v11h-15z',
  manualOp: 'M2.500 3.500h15l-4 12h-7z',
  connector: '<circle cx="10" cy="10" r="4.500"/>',
  offpage: 'M5.500 5.500h10v6l-5 4l-5-4z',
  card: 'M2.500 8.500l4-4h11v11h-15z',
  tape: 'M2.500 4q3 3 7.500 1t7.500 0v12q-3-3-7.500-1t-7.500 0z',
  summing: '<circle cx="10" cy="10" r="7.500"/><path d="M5 5l10 10M15 5l-10 10"/>',
  or: '<circle cx="10" cy="10" r="7.500"/><path d="M10 2.500v15M2.500 10h15"/>',
  collate: 'M5.500 3.500h9l-9 13h9z',
  sort: 'M10.500 3l4.500 7l-4.500 7l-4.500-7zM6 10h9',
  extract: 'M10 3.500l7 12h-14z',
  merge: 'M10 16.500l7-12h-14z',
  stored: 'M6 4.500h11.500q-3 5.500 0 11H6q-7-5.500 0-11z',
  delay: 'M3.500 3.500h7q7 0 7 6.500t-7 6.500h-7z',
  seq: 'M10 17.500a7.500 7.500 0 1 1 5-2v2h3z',
  disk: 'M2.500 6v7q0 3 7.500 3t7.500-3v-7q0-2.500-7.500-2.500t-7.500 2.500q0 3 7.500 3t7.500-3',
  direct: 'M7 2.500h7q3 2 3 7.500t-3 7.500h-7q-3-2-3-7.500t3-7.500zM13 2.500q-3 2-3 7.500t3 7.500',
  display: 'M2.500 10l4-7h7q4 2 4 7t-4 7h-7z',
  boom1: star(9, 8, 4, .2),
  boom2: star(11, 8, 5, .4),
  star4: star(4, 7.5, 2.5),
  star5: star(5, 8, 3),
  star6: star(6, 8, 4.5),
  star7: star(7, 8, 5),
  star8: numbered(star(8, 8, 6), 8),
  star10: numbered(star(10, 8, 6), 10),
  star12: numbered(star(12, 8, 6), 12),
  star16: numbered(star(16, 8, 6), 16),
  star24: numbered(star(18, 8, 6), 24),
  star32: numbered(star(20, 8, 6), 32),
  ribbonU: 'M6.500 5.500h7v7h-7zM6.500 8.500h-4l2 3l-2 3h6v-2M13.500 8.500h4l-2 3l2 3h-6v-2',
  ribbonD: 'M6.500 7.500h7v7h-7zM6.500 11.500h-4l2-3l-2-3h6v2M13.500 11.500h4l-2-3l2-3h-6v2',
  ribbonCU: 'M6.500 5q3.500-2 7 0v7q-3.500-2-7 0zM6.500 7.500h-4l2 4l-2 4q4-1 6-1v-3M13.500 7.500h4l-2 4l2 4q-4-1-6-1v-3',
  ribbonCD: 'M6.500 8q3.500 2 7 0v7q-3.500 2-7 0zM6.500 12.500h-4l2-4l-2-4q4 1 6 1v3M13.500 12.500h4l-2-4l2-4q-4 1-6 1v3',
  vroll: 'M5.500 15V4q0-1.500 2-1.500h10v3h-3v12h-11q-1-2.500 2-2.500M7 5.500h8',
  hroll: 'M3.500 4.500h2v3h12v8h-12q0 2-2 2zM5.500 7v9M15 7.500v-3h2.500v3',
  wave: 'M2.500 5q4-3 7.500 0t7.500 0v10q-4 3-7.500 0t-7.500 0z',
  wave2: 'M2.500 5q2-2 4 0t4 0t4 0t3 0v10q-2 2-4 0t-4 0t-4 0t-3 0z',
  callRect: 'M3.500 3.500h14v9h-6l-2 4l-2-4h-4z',
  callRound: 'M6 3.500h8q3 0 3 3v3q0 3-3 3h-3l-2 4l-2-4h-1q-3 0-3-3v-3q0-3 3-3z',
  callOval: 'M6 13l-2 4l5-3q8 0 8.500-5t-7.500-5.500t-7.500 5.500q0 3 3.500 4z',
  callCloud: 'M5 6a2 2 0 0 1 4-2a2 2 0 0 1 4 0a2 2 0 0 1 4 2a2 2 0 0 1 0 4a2 2 0 0 1-3 3a2 2 0 0 1-4 1a2 2 0 0 1-4-1a2 2 0 0 1-3-4a2 2 0 0 1 2-3zM3 15.500h2M4 17.500h1',
  line1: 'M8.500 5.500h9v8h-9zM2 15l6-8',
  line2: 'M8.500 5.500h9v8h-9zM2 15l2.500-7h4',
  line3: 'M8.500 5.500h9v7h-9zM8 7.500h-4.500v8l5 2',
  acc1: '<path class="dot" d="M8.500 5.500h9v8h-9z"/><path d="M2 15l6-8M8.500 4v11"/>',
  acc2: '<path class="dot" d="M8.500 5.500h9v8h-9z"/><path d="M2 15l2.500-7h4M8.500 4v11"/>',
  acc3: '<path class="dot" d="M8.500 5.500h9v7h-9z"/><path d="M8.500 4v10M8 8.500h-4.500v7l5 2"/>',
  non1: '<path class="dot" d="M8.500 5.500h9v8h-9z"/><path d="M2 15l6-8"/>',
  non2: '<path class="dot" d="M8.500 5.500h9v8h-9z"/><path d="M2 15l2.500-7h4"/>',
  non3: '<path class="dot" d="M7.500 5.500h9v7h-9z"/><path d="M7 7.500h-3.500v8l5 2"/>',
  bar1: 'M10.500 5.500h7v8h-7zM8.500 4v11M2 15l6-8',
  bar2: 'M10.500 5.500h7v8h-7zM8.500 4v11M2 15l2.500-7h4',
  bar3: 'M10.500 5.500h7v7h-7zM8.500 4v10M8 8.500h-4.500v7l5 2',
  actBack: box + 'M13 5.500v9l-7-4.500z',
  actNext: box + 'M7 5.500v9l7-4.500z',
  actFirst: box + 'M13.500 6v8l-5-4zM6.500 6v8',
  actLast: box + 'M6.500 6v8l5-4zM13.500 6v8',
  actHome: box + 'M4.500 10l5.500-5l5.500 5M5.500 9.500v5h9v-5M8.500 14v-3h3v3M13.500 8v-3',
  actInfo: `<path d="${box}M8.500 9.500h2v3M8.500 12.500h3M9.500 6.500h1"/><circle cx="10" cy="10" r="5"/>`,
  actReturn: box + 'M5.500 8v2q0 4 3.500 4t4-4v-1h2l-3-3l-3 3h1.500q0 3-2 3t-1.500-2v-2z',
  actMovie: box + 'M5.500 7.500h6v5h-6zM11.500 9.500h4v-2M11.500 11.500h4v-2M4 8h1',
  actDoc: box + 'M6.500 5.500h5l3 3v6h-8zM11.500 5v3.500h3',
  actSound: box + 'M5.500 8.500h2l3-3v9l-3-3h-2zM13 8l2-1M13 10h3M13 12l2 1',
  actHelp: `<path d="${box}"/><text class="mark" x="10" y="14.500">?</text>`,
  actBlank: box
}

const groups = [
  ['최근에 사용한 도형', 'textH textV line arrow rect oval round tri elbow elbowA right down freeform scribble arc curve braceL braceR'],
  ['선', 'line arrow arrow2 elbow elbowA elbowA2 scurve scurveA scurveA2 curve freeform scribble'],
  ['사각형', 'rect round snip1 snip2 snip2d snipR round1 round2 round2d'],
  ['기본 도형', 'textH textV oval tri rtri para trap diamond pentagon hexagon oct7 oct8 oct10 oct12 pie chord tear frame halfFrame lshape stripe cross plaque can cube bevel donut no blockArc fold smiley heart bolt sun moon cloud arc brackets braces bracketL bracketR braceL braceR'],
  ['블록 화살표', 'right left up down leftRight upDown quad triArrow bent uturn leftUp bentUp curvedR curvedL curvedU curvedD striped notched homePlate chevron callR callD callL callU callLR callQ circular'],
  ['수식 도형', 'plus minus times div eq neq'],
  ['순서도', 'rect round flatDiamond para predefined internal doc multidoc terminator prep manualIn manualOp connector offpage card tape summing or collate sort extract merge stored delay seq disk direct display'],
  ['별 및 현수막', 'boom1 boom2 star4 star5 star6 star7 star8 star10 star12 star16 star24 star32 ribbonU ribbonD ribbonCU ribbonCD vroll hroll wave wave2'],
  ['설명선', 'callRect callRound callOval callCloud line1 line2 line3 acc1 acc2 acc3 non1 non2 non3 bar1 bar2 bar3'],
  ['실행 단추', 'actBack actNext actFirst actLast actHome actInfo actReturn actMovie actDoc actSound actHelp actBlank']
]

// 갤러리 출력
const gallery = document.querySelector('#gallery')
gallery.innerHTML = groups.map(function ([name, keys]) {
  const cells = keys.split(' ').map(function (key) {
    const s = shapes[key]
    const body = s[0] === '<' ? s : `<path d="${s}"/>`
    const cls = key === 'round2' ? 'shape marked' : 'shape'
    return `<button class="${cls}" aria-label="${key}"><svg width="20" height="20" viewBox="0 0 20 20">${body}</svg></button>`
  })
  return `<h2>${name}</h2><div class="shapes">${cells.join('')}</div>`
}).join('')
```
